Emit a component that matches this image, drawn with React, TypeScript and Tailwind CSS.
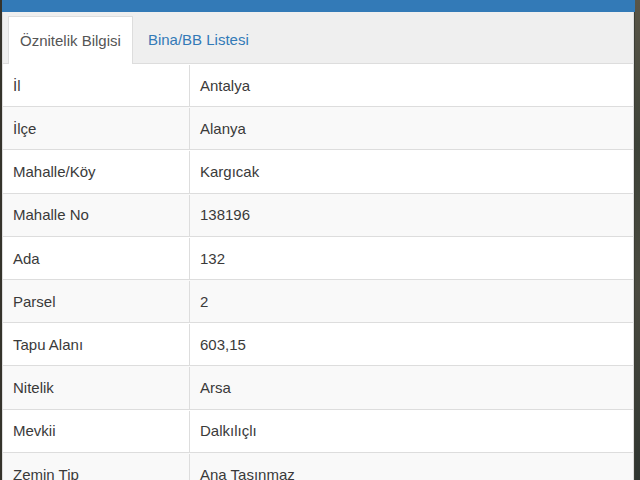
import React from "react";

const rows: [string, string][] = [
  ["İl", "Antalya"],
  ["İlçe", "Alanya"],
  ["Mahalle/Köy", "Kargıcak"],
  ["Mahalle No", "138196"],
  ["Ada", "132"],
  ["Parsel", "2"],
  ["Tapu Alanı", "603,15"],
  ["Nitelik", "Arsa"],
  ["Mevkii", "Dalkılıçlı"],
  ["Zemin Tip", "Ana Taşınmaz"],
];

export default function App() {
  return (
    <div
      className="flex h-[480px] w-[640px] overflow-hidden bg-[#3b3d35]"
      style={{ fontFamily: '"Liberation Sans", Arial, sans-serif' }}
    >
      <div className="w-[2px] shrink-0 bg-[#35332b]" />
      <div className="flex w-[633px] shrink-0 flex-col">
        <div className="h-[12px] shrink-0 bg-[#337ab7]" />
        <div className="flex w-[632px] flex-1 flex-col overflow-hidden border-l border-r border-[#ddd] bg-white">
          <div className="flex h-[52px] shrink-0 items-end border-b border-[#ddd] bg-[#efefef] pl-[5px]">
            <div className="-mb-px border border-b-0 border-[#ddd] bg-white px-[11px] py-[13px] text-[15px] leading-[21.4px] text-[#555]">
              Öznitelik Bilgisi
            </div>
            <div className="ml-[2px] -mb-px border border-transparent px-[12px] py-[13px] text-[15px] leading-[21.4px] text-[#337ab7]">
              Bina/BB Listesi
            </div>
          </div>
          <div className="flex flex-col">
            {rows.map(([k, v], i) => (
              <div
                key={k}
                className={`flex h-[43.2px] shrink-0 items-center border-b border-[#ddd] pt-px text-[15px] leading-[21.4px] text-[#3a3a3a] ${
                  i % 2 === 1 ? "bg-[#f9f9f9]" : "bg-white"
                }`}
              >
                <div className="flex h-full w-[187px] shrink-0 items-center border-r border-[#ddd] pl-[10px]">
                  {k}
                </div>
                <div className="pl-[10px]">{v}</div>
              </div>
            ))}
          </div>
        </div>
      </div>
      <div className="flex-1 bg-[linear-gradient(180deg,#5a5648_0%,#3d4238_30%,#4a4a40_60%,#2f3530_100%)]" />
    </div>
  );
}
